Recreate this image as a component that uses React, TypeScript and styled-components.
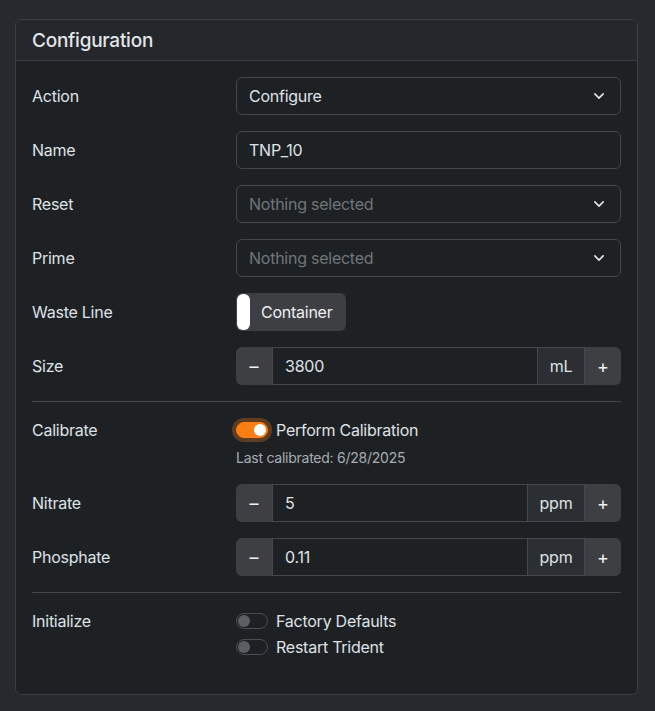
import React from 'react';
import styled, { createGlobalStyle } from 'styled-components';

const GlobalStyle = createGlobalStyle`
  body {
    margin: 0;
    background: #26292d;
    font-family: Inter, "Noto Sans", "Liberation Sans", sans-serif;
    color: #dee2e6;
    font-size: 16px;
    letter-spacing: -0.25px;
  }
`;

const Page = styled.div`
  padding: 19px 17px 18px 15px;
`;

const Card = styled.section`
  border: 1px solid #3a3e42;
  border-radius: 6px;
  background: #1e2124;
  overflow: hidden;
`;

const CardHeader = styled.header`
  height: 40px;
  padding: 0 16px;
  display: flex;
  align-items: center;
  background: #24272b;
  border-bottom: 1px solid #3a3e42;
`;

const Title = styled.h5`
  margin: 0;
  font-size: 19px;
  font-weight: 500;
  color: #e3e6e9;
`;

const CardBody = styled.div`
  padding: 16px 16px 19px;
`;

const Row = styled.div<{ $top?: boolean }>`
  display: grid;
  grid-template-columns: 180px 1fr;
  column-gap: 24px;
  align-items: ${(p) => (p.$top ? 'start' : 'center')};
  margin-bottom: 16px;
  min-height: ${(p) => (p.$top ? 'auto' : '38px')};
`;

const Label = styled.label`
  font-size: 16px;
  line-height: 24px;
  color: #dee2e6;
`;

const Divider = styled.hr`
  margin: 0 0 16px;
  border: 0;
  border-top: 1px solid #43474b;
`;

const FieldBox = styled.div`
  position: relative;
  height: 38px;
  box-sizing: border-box;
  border: 1px solid #44484c;
  border-radius: 6px;
  background: #1e2124;
  display: flex;
  align-items: center;
  padding: 0 12px;
`;

const FieldText = styled.span<{ $muted?: boolean }>`
  flex: 1;
  font-size: 16px;
  color: ${(p) => (p.$muted ? '#6f757b' : '#dee2e6')};
`;

const Chevron = () => (
  <svg width="14" height="10" viewBox="0 0 16 12" style={{ marginRight: 2 }}>
    <path d="M3 3.5l5 5 5-5" fill="none" stroke="#dee2e6" strokeWidth="2" strokeLinecap="round" strokeLinejoin="round" />
  </svg>
);

const Select: React.FC<{ value?: string; placeholder?: string }> = ({ value, placeholder }) => (
  <FieldBox>
    <FieldText $muted={!value}>{value ?? placeholder}</FieldText>
    <Chevron />
  </FieldBox>
);

const ToggleButton = styled.div`
  width: 110px;
  height: 38px;
  box-sizing: border-box;
  border-radius: 6px;
  background: #3d3f42;
  display: flex;
  align-items: center;
  padding: 1px;
  gap: 11px;
  font-size: 16px;
  color: #eef0f2;
`;

const Pill = styled.span`
  width: 13px;
  height: 36px;
  border-radius: 6px;
  background: #ffffff;
`;

const Group = styled.div`
  display: flex;
  height: 38px;
`;

const GroupButton = styled.button<{ $side: 'left' | 'right' }>`
  width: 36px;
  border: 0;
  background: #3d3f42;
  color: #eef0f2;
  font-family: inherit;
  font-size: 18px;
  padding: 0;
  border-radius: ${(p) => (p.$side === 'left' ? '6px 0 0 6px' : '0 6px 6px 0')};
`;

const GroupInput = styled.div`
  flex: 1;
  box-sizing: border-box;
  border: 1px solid #44484c;
  border-right: 0;
  background: #1e2124;
  display: flex;
  align-items: center;
  padding: 0 12px;
  font-size: 16px;
  color: #dee2e6;
`;

const GroupText = styled.div<{ $w: number }>`
  width: ${(p) => p.$w}px;
  box-sizing: border-box;
  border: 1px solid #44484c;
  background: #2b2e32;
  display: flex;
  align-items: center;
  justify-content: center;
  font-size: 16px;
  color: #dee2e6;
`;

const NumberGroup: React.FC<{ value: string; unit: string; unitWidth: number }> = ({ value, unit, unitWidth }) => (
  <Group>
    <GroupButton $side="left">–</GroupButton>
    <GroupInput>{value}</GroupInput>
    <GroupText $w={unitWidth}>{unit}</GroupText>
    <GroupButton $side="right">+</GroupButton>
  </Group>
);

const Check = styled.div`
  display: flex;
  align-items: center;
  gap: 8px;
  height: 24px;
  font-size: 16px;
  color: #dee2e6;
  & + & {
    margin-top: 2px;
  }
`;

const Switch = styled.span<{ $on?: boolean }>`
  position: relative;
  width: 32px;
  height: 16px;
  box-sizing: border-box;
  border-radius: 8px;
  border: 1px solid ${(p) => (p.$on ? '#fd7e14' : '#4a4e53')};
  background: ${(p) => (p.$on ? '#fd7e14' : 'transparent')};
  box-shadow: ${(p) => (p.$on ? '0 0 0 4px rgba(253, 126, 20, 0.3)' : 'none')};

  &::after {
    content: '';
    position: absolute;
    top: 1px;
    left: ${(p) => (p.$on ? '17px' : '1px')};
    width: 12px;
    height: 12px;
    border-radius: 50%;
    background: ${(p) => (p.$on ? '#ffffff' : '#5b5f64')};
  }
`;

const Hint = styled.div`
  margin-top: 5px;
  font-size: 14px;
  line-height: 21px;
  color: #a7adb3;
`;

export default function App() {
  return (
    <Page>
      <GlobalStyle />
      <Card>
        <CardHeader>
          <Title>Configuration</Title>
        </CardHeader>
        <CardBody>
          <Row>
            <Label>Action</Label>
            <Select value="Configure" />
          </Row>
          <Row>
            <Label>Name</Label>
            <FieldBox>
              <FieldText>TNP_10</FieldText>
            </FieldBox>
          </Row>
          <Row>
            <Label>Reset</Label>
            <Select placeholder="Nothing selected" />
          </Row>
          <Row>
            <Label>Prime</Label>
            <Select placeholder="Nothing selected" />
          </Row>
          <Row>
            <Label>Waste Line</Label>
            <ToggleButton>
              <Pill />
              Container
            </ToggleButton>
          </Row>
          <Row>
            <Label>Size</Label>
            <NumberGroup value="3800" unit="mL" unitWidth={48} />
          </Row>
          <Divider />
          <Row $top>
            <Label>Calibrate</Label>
            <div>
              <Check>
                <Switch $on />
                Perform Calibration
              </Check>
              <Hint>Last calibrated: 6/28/2025</Hint>
            </div>
          </Row>
          <Row>
            <Label>Nitrate</Label>
            <NumberGroup value="5" unit="ppm" unitWidth={58} />
          </Row>
          <Row>
            <Label>Phosphate</Label>
            <NumberGroup value="0.11" unit="ppm" unitWidth={58} />
          </Row>
          <Divider />
          <Row $top>
            <Label>Initialize</Label>
            <div>
              <Check>
                <Switch />
                Factory Defaults
              </Check>
              <Check>
                <Switch />
                Restart Trident
              </Check>
            </div>
          </Row>
        </CardBody>
      </Card>
    </Page>
  );
}
